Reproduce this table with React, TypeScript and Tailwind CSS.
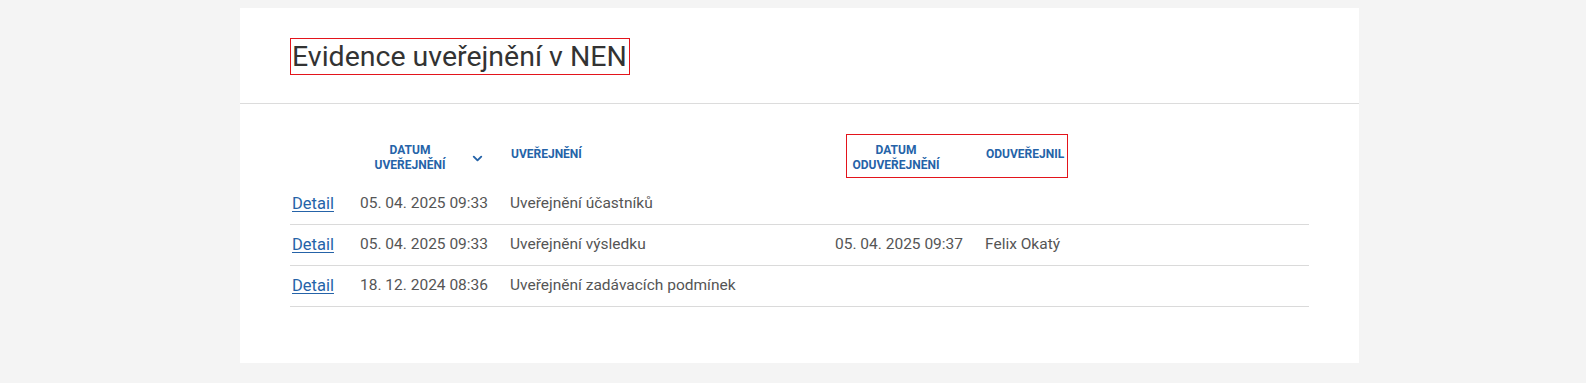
import { ChevronDown } from 'lucide-react';

interface Row {
  published: string;
  type: string;
  unpublished?: string;
  unpublishedBy?: string;
}

const rows: Row[] = [
  { published: '05. 04. 2025 09:33', type: 'Uveřejnění účastníků' },
  {
    published: '05. 04. 2025 09:33',
    type: 'Uveřejnění výsledku',
    unpublished: '05. 04. 2025 09:37',
    unpublishedBy: 'Felix Okatý',
  },
  { published: '18. 12. 2024 08:36', type: 'Uveřejnění zadávacích podmínek' },
];

export default function App() {
  return (
    <div className="min-h-[383px] bg-[#f4f4f4] pt-[8px] font-['Roboto',sans-serif]">
      <div className="ml-[240px] w-[1119px] bg-white">
        <div className="px-[50px] pt-[30px] pb-[28px]">
          <h1 className="inline-block border border-[#e3141b] pl-[1px] pr-[2px] text-[28.5px] leading-[35px] font-normal text-[#333]">
            Evidence uveřejnění v NEN
          </h1>
        </div>

        <div className="border-t border-[#dcdcdc] px-[50px] pt-[30px] pb-[56px]">
          <div className="flex h-[50px] items-start text-[12px] leading-[15px] font-bold text-[#2563a8] uppercase">
            <div className="w-[70px]" />
            <div className="flex w-[150px] items-center pt-[9px]">
              <span className="w-[100px] text-center">
                Datum
                <br />
                Uveřejnění
              </span>
              <ChevronDown className="ml-[10px] h-[15px] w-[15px]" strokeWidth={3} />
            </div>
            <div className="w-[325px] pt-[13px] pl-[1px]">Uveřejnění</div>
            <div className="ml-[11px] flex h-[44px] items-start border border-[#e3141b] pr-[3px]">
              <span className="w-[98px] pt-[8px] text-center">
                Datum
                <br />
                Oduveřejnění
              </span>
              <span className="ml-[41px] pt-[12px]">Oduveřejnil</span>
            </div>
          </div>

          {rows.map((row, i) => (
            <div
              key={i}
              className="flex h-[41px] items-center border-b border-[#dadada] text-[15.5px] text-[#555]"
            >
              <a href="#" className="w-[70px] pl-[2px] text-[16.5px] text-[#2563a8] underline underline-offset-2">
                Detail
              </a>
              <span className="w-[150px]">{row.published}</span>
              <span className="w-[325px]">{row.type}</span>
              <span className="w-[150px]">{row.unpublished}</span>
              <span>{row.unpublishedBy}</span>
            </div>
          ))}
        </div>
      </div>
    </div>
  );
}
